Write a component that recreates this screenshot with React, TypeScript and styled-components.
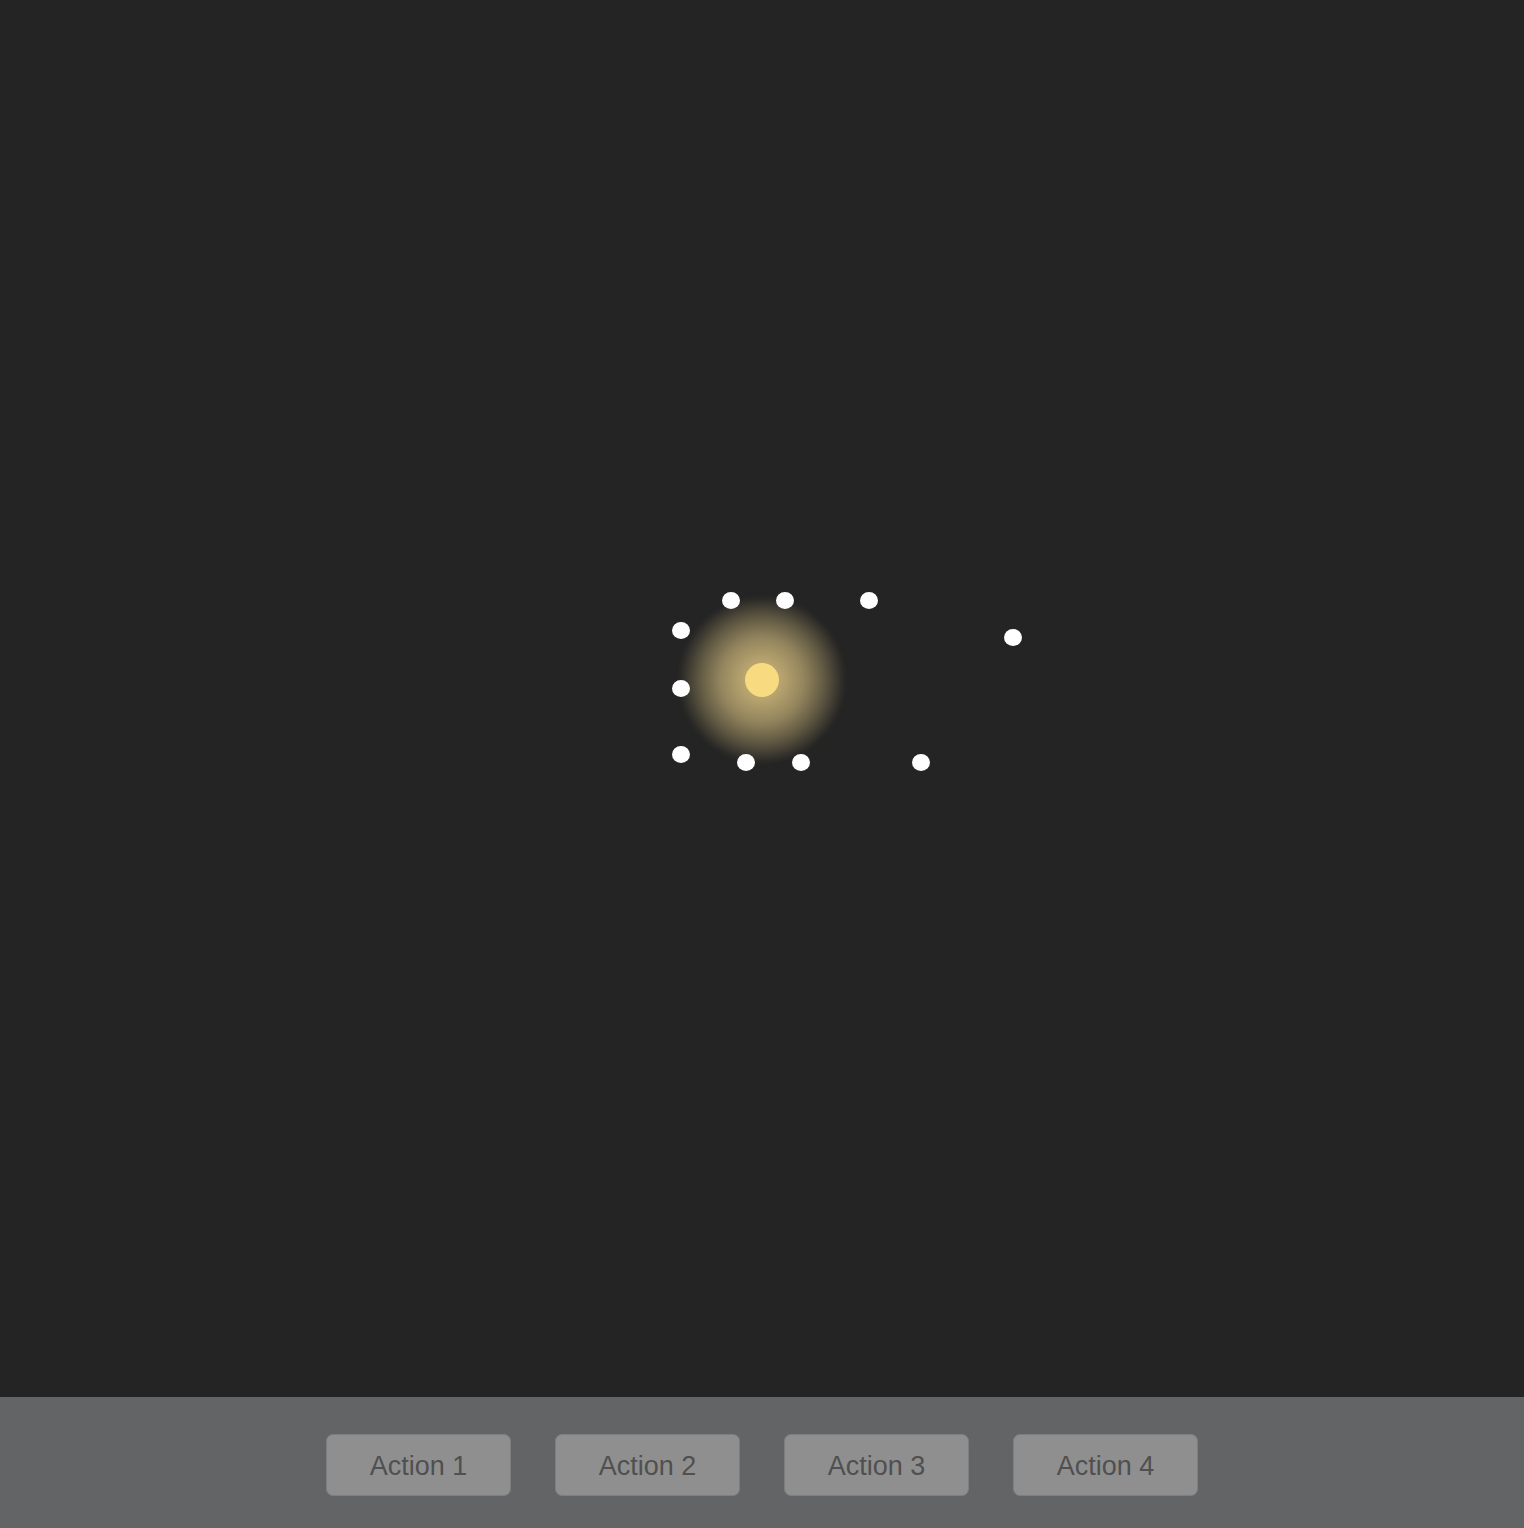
import React from "react";
import styled, { createGlobalStyle } from "styled-components";

const GlobalStyle = createGlobalStyle`
  html, body, #root { margin: 0; padding: 0; height: 100%; }
  body { background: #242424; font-family: "Liberation Sans", Arial, sans-serif; overflow: hidden; }
`;

const Page = styled.div`
  display: flex;
  flex-direction: column;
  height: 100vh;
  width: 100vw;
`;

const Canvas = styled.div`
  position: relative;
  flex: 1;
  background: #242424;
  overflow: hidden;
`;

const Glow = styled.div`
  position: absolute;
  left: 678px;
  top: 596px;
  width: 168px;
  height: 168px;
  border-radius: 50%;
  filter: blur(2px);
  background: radial-gradient(
    circle closest-side,
    rgba(238, 212, 140, 0.8) 0%,
    rgba(232, 206, 136, 0.74) 25%,
    rgba(222, 198, 132, 0.6) 50%,
    rgba(210, 188, 125, 0.38) 72%,
    rgba(200, 180, 120, 0.14) 90%,
    rgba(200, 180, 120, 0) 100%
  );
`;

const Sun = styled.div`
  position: absolute;
  left: 745px;
  top: 663px;
  width: 34px;
  height: 34px;
  border-radius: 50%;
  background: #f8da80;
`;

const Dot = styled.div`
  position: absolute;
  width: 18px;
  height: 17px;
  margin-left: -9px;
  margin-top: -8.5px;
  border-radius: 50%;
  background: #ffffff;
`;

const Toolbar = styled.div`
  flex: 0 0 131px;
  box-sizing: border-box;
  background: #636466;
  display: flex;
  justify-content: center;
  align-items: flex-start;
  gap: 44px;
  padding-top: 37px;
`;

const ActionButton = styled.button`
  width: 185px;
  height: 62px;
  box-sizing: border-box;
  background: #8f8f8f;
  border: 1px solid #7e7e7e;
  border-radius: 7px;
  color: #505050;
  font-family: "Liberation Sans", Arial, sans-serif;
  font-size: 27px;
  padding: 3px 0 0;
  cursor: pointer;
`;

const dots: Array<[number, number]> = [
  [731, 600],
  [785, 600],
  [869, 600],
  [681, 630],
  [1013, 637],
  [681, 688],
  [681, 754],
  [746, 762],
  [801, 762],
  [921, 762],
];

export default function App() {
  return (
    <Page>
      <GlobalStyle />
      <Canvas>
        <Glow />
        <Sun />
        {dots.map(([x, y], i) => (
          <Dot key={i} style={{ left: x, top: y }} />
        ))}
      </Canvas>
      <Toolbar>
        {[1, 2, 3, 4].map((n) => (
          <ActionButton key={n}>Action {n}</ActionButton>
        ))}
      </Toolbar>
    </Page>
  );
}
